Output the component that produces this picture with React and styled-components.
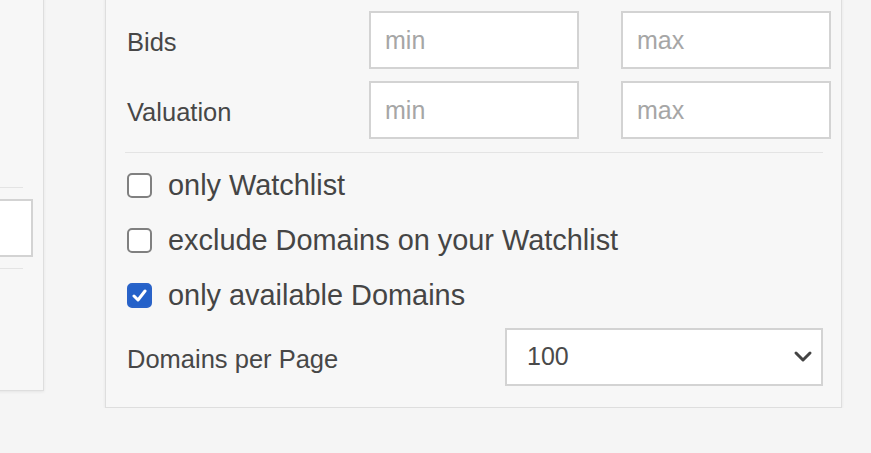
import styled, { createGlobalStyle } from 'styled-components';

const Global = createGlobalStyle`
body {
  margin: 0;
  background: #f5f5f5;
  font-family: "Liberation Sans", Arial, sans-serif;
  overflow: hidden;
}
`
const Page = styled.div`
display: flex;
align-items: flex-start;
gap: 61px;
margin: -40px 0 0 -300px;
`
const Panel = styled.div`
box-sizing: border-box;
background: #f7f7f7;
border: 1px solid #dedede;
box-shadow: 0 1px 3px rgba(0, 0, 0, 0.07);
display: flex;
flex-direction: column;
`
const SidePanel = styled(Panel)`
width: 344px;
height: 431px;
padding: 0 20px 121px 20px;
justify-content: flex-end;
`
const FilterPanel = styled(Panel)`
width: 737px;
padding: 50px 18px 21px 19px;
`
const Rule = styled.div`
height: 1px;
background: #e4e4e4;
margin: ${p => p.$m || '0'};
`
const Field = styled.input`
box-sizing: border-box;
height: 58px;
width: ${p => p.$w || '100%'};
border: 2px solid #d3d3d3;
background: #fff;
padding: 0 14px;
font-family: inherit;
font-size: 25px;
color: #555;
outline: none;
&::placeholder { color: #a6a6a6; }
`
const RangeGrid = styled.div`
display: grid;
grid-template-columns: 202px 210px 210px;
column-gap: 42px;
row-gap: 12px;
align-items: center;
`
const Label = styled.span`
font-size: 25.5px;
color: #474747;
padding-left: 2px;
padding-top: 5px;
`
const Checks = styled.div`
display: flex;
flex-direction: column;
gap: 31px;
margin: 20px 0 0 2px;
`
const CheckRow = styled.label`
display: flex;
align-items: center;
gap: 16px;
height: 24px;
font-size: 28.9px;
color: #454545;
`
const Box = styled.span`
box-sizing: border-box;
width: 25px;
height: 25px;
border-radius: 5px;
flex: none;
display: flex;
align-items: center;
justify-content: center;
border: 2px solid ${p => (p.$on ? '#2a63c8' : '#808080')};
background: ${p => (p.$on ? '#2461c9' : '#fff')};
`
const PerPage = styled.div`
display: flex;
align-items: center;
justify-content: space-between;
margin-top: 21px;
`
const Select = styled.div`
box-sizing: border-box;
width: 318px;
height: 58px;
border: 2px solid #d3d3d3;
background: #fff;
display: flex;
align-items: center;
justify-content: space-between;
padding: 0 8px 2px 20px;
font-size: 25px;
color: #4a4a4a;
`

function Check({ on, children }) {
    return (
        <CheckRow>
            <Box $on={on}>
                {on && (
                    <svg width="15" height="13" viewBox="0 0 15 13">
                        <path d="M2 7 L6 11 L13 2" fill="none" stroke="#fff" strokeWidth="3" strokeLinecap="round" strokeLinejoin="round" />
                    </svg>
                )}
            </Box>
            {children}
        </CheckRow>
    );
}

export default function App() {
    return (
        <>
            <Global />
            <Page>
                <SidePanel>
                    <Rule $m="0 0 11px 0" />
                    <Field $w="calc(100% + 10px)" />
                    <Rule $m="11px 0 0 0" />
                </SidePanel>
                <FilterPanel>
                    <RangeGrid>
                        <Label>Bids</Label>
                        <Field placeholder="min" />
                        <Field placeholder="max" />
                        <Label>Valuation</Label>
                        <Field placeholder="min" />
                        <Field placeholder="max" />
                    </RangeGrid>
                    <Rule $m="13px 0 0 0" />
                    <Checks>
                        <Check>only Watchlist</Check>
                        <Check>exclude Domains on your Watchlist</Check>
                        <Check on>only available Domains</Check>
                    </Checks>
                    <PerPage>
                        <Label>Domains per Page</Label>
                        <Select>
                            100
                            <svg width="20" height="14" viewBox="0 0 20 14">
                                <path d="M3 4 L10 11 L17 4" fill="none" stroke="#444" strokeWidth="3" strokeLinecap="round" strokeLinejoin="round" />
                            </svg>
                        </Select>
                    </PerPage>
                </FilterPanel>
            </Page>
        </>
    );
}
